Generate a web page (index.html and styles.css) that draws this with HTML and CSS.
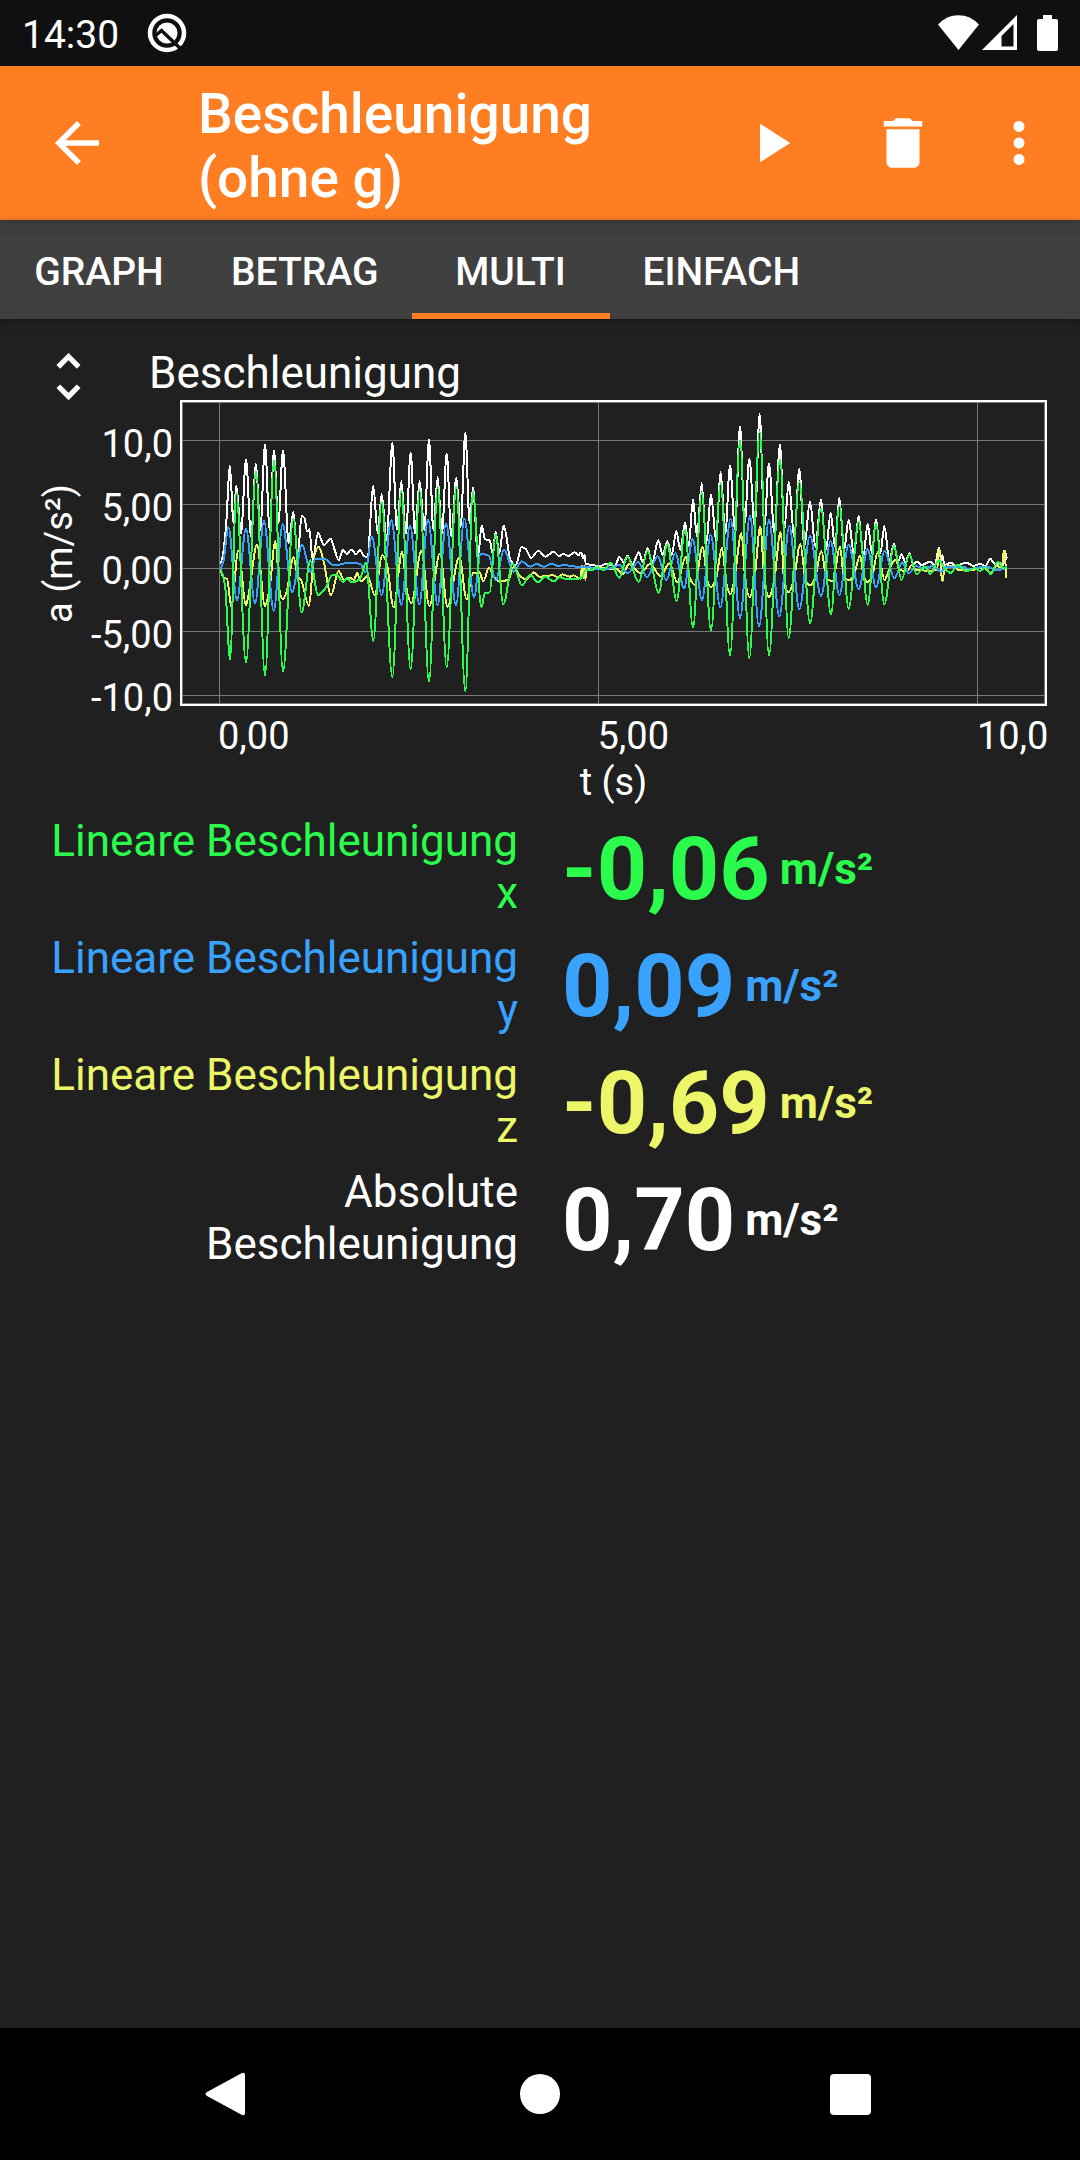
FILE: index.html
```html
<!DOCTYPE html>
<html lang="de">
<head>
<meta charset="utf-8">
<meta name="viewport" content="width=device-width">
<title>Beschleunigung (ohne g)</title>
<link rel="stylesheet" href="styles.css">
</head>
<body>
<div class="status-bar">
  <time class="clock">14:30</time>
  <svg class="status-logo" viewBox="0 0 40 40" aria-hidden="true">
    <circle cx="20" cy="20" r="17" fill="none" stroke="#fff" stroke-width="4.500"/>
    <circle cx="20" cy="20" r="10.500" fill="#fff"/>
    <path d="M8 23l6.500-5.500L36 38" fill="none" stroke="#101010" stroke-width="3.500"/>
  </svg>
  <div class="status-icons">
    <svg class="wifi" viewBox="0 0 41 36" aria-hidden="true"><path d="M0 9.500C11-3 30-3 41 9.500L20.500 35z"/></svg>
    <svg class="signal" viewBox="0 0 35 36" aria-hidden="true"><path fill-rule="evenodd" d="M35 0v35H0zM31.500 9L19.500 21v10.500h12z"/></svg>
    <svg class="battery" viewBox="0 0 21 36" aria-hidden="true"><path d="M6 0h9v4h4q2 0 2 2v28q0 2-2 2H2q-2 0-2-2V6q0-2 2-2h4z"/></svg>
  </div>
</div>

<header class="app-bar">
  <button class="icon-button back" aria-label="Zurück"><svg viewBox="0 0 24 24"><path d="M20 11H7.830l5.590-5.590L12 4l-8 8 8 8 1.410-1.410L7.830 13H20v-2z"/></svg></button>
  <h1 class="title">Beschleunigung (ohne g)</h1>
  <button class="icon-button action" aria-label="Start"><svg viewBox="0 0 24 24"><path d="M8 5v14l11-7z"/></svg></button>
  <button class="icon-button action" aria-label="Löschen"><svg viewBox="0 0 24 24"><path d="M6 19c0 1.100.9 2 2 2h8c1.100 0 2-.9 2-2V7H6v12zM19 4h-3.500l-1-1h-5l-1 1H5v2h14V4z"/></svg></button>
  <button class="icon-button more" aria-label="Mehr"><svg viewBox="0 0 24 24"><path d="M12 8c1.100 0 2-.9 2-2s-.9-2-2-2-2 .9-2 2 .9 2 2 2zm0 2c-1.100 0-2 .9-2 2s.9 2 2 2 2-.9 2-2-.9-2-2-2zm0 6c-1.100 0-2 .9-2 2s.9 2 2 2 2-.9 2-2-.9-2-2-2z"/></svg></button>
</header>

<nav class="tabs">
  <button class="tab">GRAPH</button>
  <button class="tab">BETRAG</button>
  <button class="tab tab-active">MULTI</button>
  <button class="tab">EINFACH</button>
</nav>

<main class="content">
  <section class="graph">
    <div class="graph-head">
      <button class="icon-button expand" aria-label="Vergrößern"><svg viewBox="0 0 24 24"><path d="M12 5.830L15.170 9l1.410-1.410L12 3 7.410 7.590 8.830 9 12 5.830zm0 12.340L8.830 15l-1.410 1.410L12 21l4.590-4.590L15.170 15 12 18.170z"/></svg></button>
      <h2 class="graph-title">Beschleunigung</h2>
    </div>
    <div class="chart">
      <div class="y-title">a (m/s²)</div>
      <div class="y-ticks"><span>10,0</span><span>5,00</span><span>0,00</span><span>-5,00</span><span>-10,0</span></div>
      <svg class="plot" viewBox="0 30 2601 918" preserveAspectRatio="none" role="img" aria-label="Beschleunigung über der Zeit">
        <g class="grid">
          <path d="M118.500 30V948M1255.500 30V948M2392.500 30V948"/>
          <path d="M0 151.500H2601M0 343.500H2601M0 535.500H2601M0 724.500H2601M0 916.500H2601"/>
          <rect x="7.500" y="37.500" width="2586" height="903"/>
        </g>
        <rect class="frame" x="3" y="33" width="2595" height="912"/>
        <path class="series abs" id="abs"/>
        <path class="series z" id="z"/>
        <path class="series y" id="y"/>
        <path class="series x" id="x"/>
      </svg>
      <div class="x-ticks"><span>0,00</span><span>5,00</span><span>10,0</span></div>
      <div class="x-title">t (s)</div>
    </div>
  </section>

  <dl class="values">
    <div class="row green"><dt>Lineare Beschleunigung x</dt><dd><span class="number">-0,06</span><span class="unit">m/s²</span></dd></div>
    <div class="row blue"><dt>Lineare Beschleunigung y</dt><dd><span class="number">0,09</span><span class="unit">m/s²</span></dd></div>
    <div class="row yellow"><dt>Lineare Beschleunigung z</dt><dd><span class="number">-0,69</span><span class="unit">m/s²</span></dd></div>
    <div class="row"><dt>Absolute Beschleunigung</dt><dd><span class="number">0,70</span><span class="unit">m/s²</span></dd></div>
  </dl>
</main>

<footer class="system-nav">
  <button class="nav-button" aria-label="Zurück"><svg viewBox="0 0 48 48"><path d="M38 3L3 22q-3 2 0 4l35 19q3 1 3-2V5q0-3-3-2z"/></svg></button>
  <button class="nav-button" aria-label="Startseite"><svg viewBox="0 0 48 48"><circle cx="24" cy="24" r="20"/></svg></button>
  <button class="nav-button" aria-label="Übersicht"><svg viewBox="0 0 48 48"><rect x="2" y="4" width="41" height="41" rx="4"/></svg></button>
</footer>
<script src="chart.js"></script>
</body>
</html>
```
FILE: styles.css
```css
* { box-sizing: border-box; }

body {
  margin: 0;
  min-height: 100vh;
  display: flex;
  flex-direction: column;
  background: #202020;
  color: #fff;
  font-family: Roboto, "Liberation Sans", sans-serif;
  font-size: 44px;
  line-height: 52px;
}

h1, h2, dl, dt, dd { margin: 0; font-weight: 400; }

button {
  border: 0;
  padding: 0;
  background: none;
  color: inherit;
  font: inherit;
}

svg { display: block; fill: #fff; }

.status-bar {
  display: flex;
  align-items: center;
  height: 66px;
  padding: 0 22px;
  background: #101010;
}
.clock { padding-top: 4px; font-size: 39px; line-height: 44px; }
.status-logo { width: 40px; height: 40px; margin-left: 28px; }
.status-icons { display: flex; margin-left: auto; }
.wifi { width: 41px; height: 36px; }
.signal { width: 35px; height: 36px; margin: 0 20px 0 3px; }
.battery { width: 21px; height: 36px; }

.app-bar {
  display: flex;
  align-items: center;
  min-height: 154px;
  padding: 0 11px 0 44px;
  background: #ff7e22;
}
.icon-button { display: flex; justify-content: center; align-items: center; flex: none; }
.icon-button svg { width: 66px; height: 66px; }
.title {
  flex: 1;
  padding-top: 6px;
  margin-left: 88px;
  font-size: 55px;
  font-weight: 500;
  line-height: 64px;
}
.action { width: 132px; height: 132px; }
.more { width: 100px; height: 132px; }

.tabs {
  display: flex;
  height: 99px;
  background: linear-gradient(#393939, #404040 20px);
  box-shadow: 0 2px 8px rgba(0, 0, 0, 0.3);
}
.tab {
  min-width: 198px;
  padding: 10px 33px 0;
  border-bottom: 6px solid transparent;
  font-size: 39px;
  font-weight: 500;
  line-height: 44px;
}
.tab-active { border-bottom-color: #ff7e22; }

.content { flex: 1; padding-top: 26px; }

.graph { padding: 0 33px 0 37px; }
.graph-head { display: flex; align-items: flex-start; height: 55px; }
.expand svg { width: 63px; height: 63px; }
.graph-title { padding-top: 2px; margin-left: 49px; font-size: 44px; }

.chart {
  display: grid;
  grid-template-columns: 44px 99px 1fr;
  grid-template-rows: 306px auto auto;
  font-size: 38px;
  line-height: 44px;
}
.y-title {
  justify-self: start;
  align-self: center;
  writing-mode: vertical-rl;
  rotate: 180deg;
  white-space: nowrap;
}
.y-ticks {
  grid-row: 1 / 3;
  grid-column: 2;
  display: flex;
  flex-direction: column;
  justify-content: space-between;
  align-self: start;
  align-items: flex-end;
  height: 320px;
  padding: 22px 7px 0 0;
}
.plot { grid-row: 1; grid-column: 3; width: 100%; height: 306px; shape-rendering: crispEdges; }
.x-ticks {
  grid-column: 3;
  display: grid;
  grid-template-columns: 379fr 379fr 70fr;
  padding: 8px 0 0 38px;
}
.x-ticks span { width: 0; }
.x-title { grid-column: 3; padding-top: 2px; text-align: center; }

.grid path, .grid rect { fill: none; stroke: #7a7a7a; stroke-width: 3; }
.frame { fill: none; stroke: #fff; stroke-width: 6; }
.series { fill: none; stroke-width: 6; stroke-linejoin: round; }
.abs { stroke: #fff; }
.x { stroke: #2bfb4c; }
.y { stroke: #39a2ff; }
.z { stroke: #edf668; }

.values { padding: 11px 33px 0; }
.row { display: grid; grid-template-columns: 1fr 1fr; align-items: start; padding-bottom: 13px; }
.row dt { padding-right: 22px; text-align: right; }
.row dd { display: flex; align-items: center; gap: 10px; padding-left: 22px; font-weight: 700; }
.number { padding-top: 4px; font-size: 88px; line-height: 100px; }
.unit { padding-top: 4px; }
.green { color: #2bfb4c; }
.blue { color: #39a2ff; }
.yellow { color: #edf668; }

.system-nav {
  display: flex;
  justify-content: center;
  gap: 180px;
  height: 132px;
  background: #000;
}
.nav-button { display: flex; justify-content: center; align-items: center; width: 132px; }
.nav-button svg { width: 48px; height: 48px; }
```
FILE: chart.js
```js
// Sample points of every series in plot units, as "x,y" pairs.
const series = {
  abs: `120,520 128,498 138,410 150,228 160,400 169,287 183,430 198,208 213,440 228,221 241,420 255,163 269,420 282,181 295,400 309,181 326,460 340,367 353,500 365,378 374,384 381,425 388,418 398,510 414,429 432,465 452,446 464,480 476,510 489,480 500,492 514,479 528,493 541,480 550,497 562,502 580,289 593,430 605,313 620,450 637,159 651,420 664,274 678,430 692,187 705,430 719,274 733,420 747,148 760,420 773,262 786,430 800,190 814,440 829,263 842,410 856,129 869,400 879,292 894,500 905,407 915,448 929,450 938,490 947,425 958,490 971,406 992,512 1007,525 1025,471 1038,478 1053,504 1075,482 1096,500 1121,485 1137,498 1150,492 1165,498 1184,487 1196,495 1203,487 1209,505 1214,494 1217,522 1240,525 1255,530 1279,522 1305,528 1318,501 1332,518 1342,497 1358,522 1376,487 1389,517 1403,475 1416,518 1435,451 1448,495 1462,454 1475,495 1489,424 1501,480 1515,398 1526,470 1539,328 1551,440 1565,280 1579,460 1593,313 1608,450 1622,247 1636,430 1650,226 1665,420 1680,108 1694,400 1708,205 1724,410 1739,72 1753,410 1767,220 1783,430 1800,163 1813,420 1826,277 1843,440 1858,237 1873,470 1890,334 1906,470 1923,328 1938,480 1952,368 1965,470 1978,322 1992,480 2006,389 2022,495 2036,377 2050,500 2063,401 2076,490 2088,388 2101,490 2113,409 2128,512 2142,462 2154,515 2165,493 2176,518 2188,490 2200,522 2210,515 2225,525 2251,515 2265,525 2277,472 2282,505 2287,495 2293,525 2313,518 2325,527 2360,518 2380,528 2400,522 2417,528 2430,506 2445,522 2460,520 2470,525 2475,485 2482,508`,
  z: `120,540 130,562 141,567 154,650 175,482 198,645 208,600 231,463 255,648 268,600 286,453 300,610 309,628 320,605 341,500 352,555 364,572 387,648 402,500 416,470 430,510 453,615 476,543 492,570 510,563 522,570 531,549 543,574 563,558 584,615 607,496 620,520 641,652 666,486 682,610 694,640 724,483 748,648 780,490 802,650 838,502 860,628 878,550 898,547 910,574 927,533 942,560 960,575 986,568 1001,530 1020,558 1038,568 1062,547 1078,560 1120,556 1135,562 1147,553 1170,560 1180,556 1202,566 1206,528 1210,565 1214,528 1216,570 1219,540 1250,534 1290,536 1310,537 1328,553 1347,522 1382,550 1410,522 1442,558 1468,520 1492,577 1517,500 1530,565 1544,584 1568,470 1583,575 1593,591 1608,565 1626,474 1640,585 1651,612 1663,570 1684,430 1697,580 1709,622 1723,570 1741,410 1755,590 1767,621 1782,575 1802,425 1814,590 1826,606 1840,575 1861,463 1877,570 1890,587 1905,565 1924,483 1940,566 1958,573 1980,470 1992,563 2007,570 2020,560 2040,497 2052,563 2063,576 2076,560 2093,487 2114,570 2125,545 2148,508 2158,540 2182,543 2194,526 2210,540 2250,542 2272,538 2275,480 2279,480 2283,520 2285,572 2289,572 2292,540 2310,527 2340,541 2370,541 2410,533 2432,550 2450,528 2466,533 2471,482 2475,482 2478,560 2482,562`,
  y: `120,538 130,515 145,411 171,630 198,416 225,640 252,393 281,662 308,402 336,607 366,464 392,545 405,507 435,507 458,524 478,524 500,519 540,521 557,547 575,440 605,615 634,390 664,645 690,407 718,643 744,388 773,645 798,401 828,646 853,386 882,622 902,492 926,497 947,571 972,479 1001,545 1025,514 1050,530 1070,522 1092,530 1115,521 1135,528 1152,525 1190,530 1220,530 1250,537 1295,535 1318,524 1343,549 1375,516 1401,562 1433,498 1459,571 1486,489 1512,595 1538,448 1566,630 1592,435 1621,652 1652,386 1680,684 1710,378 1737,710 1767,390 1798,680 1828,408 1858,658 1890,437 1923,618 1952,453 1978,615 2006,464 2036,597 2063,478 2088,592 2114,482 2143,565 2167,517 2186,550 2208,528 2230,535 2260,528 2282,545 2300,530 2350,530 2365,537 2420,530 2450,540 2470,537 2482,530`,
  x: `120,538 135,585 150,808 169,308 198,818 228,245 255,856 282,212 309,845 340,386 365,667 391,511 414,615 438,592 456,556 472,556 489,577 501,564 516,577 540,566 558,518 580,752 605,335 637,862 664,303 692,838 719,300 747,875 773,290 800,832 829,290 856,905 879,306 904,652 915,609 929,607 947,434 970,643 998,521 1026,586 1050,555 1074,577 1096,560 1122,575 1138,561 1160,568 1180,568 1205,563 1217,541 1235,541 1250,532 1272,540 1292,519 1318,563 1342,500 1376,576 1403,483 1436,608 1462,463 1490,633 1515,418 1539,713 1565,308 1593,721 1622,280 1650,797 1680,152 1708,806 1739,122 1767,797 1800,208 1826,745 1858,275 1890,700 1923,356 1953,673 1978,347 2006,656 2036,395 2063,645 2088,402 2113,643 2142,468 2165,570 2188,493 2210,552 2236,530 2251,552 2277,511 2295,536 2312,549 2334,524 2358,544 2385,534 2400,543 2417,532 2432,553 2453,516 2470,535 2482,535`
};

// Monotone cubic curve: flat at every peak and trough, no overshoot.
function curve(points) {
  const secant = (a, b) => (b[1] - a[1]) / (b[0] - a[0]);
  const slopes = points.map((p, i) => {
    if (i === 0 || i === points.length - 1) return 0;
    const before = secant(points[i - 1], p);
    const after = secant(p, points[i + 1]);
    return before * after > 0 ? (2 * before * after) / (before + after) : 0;
  });
  let d = `M${points[0]}`;
  for (let i = 1; i < points.length; i++) {
    const [x0, y0] = points[i - 1];
    const [x1, y1] = points[i];
    const third = (x1 - x0) / 3;
    d += `C${x0 + third},${y0 + slopes[i - 1] * third} ${x1 - third},${y1 - slopes[i] * third} ${x1},${y1}`;
  }
  return d;
}

for (const [id, data] of Object.entries(series)) {
  const points = data.split(" ").map((pair) => pair.split(",").map(Number));
  document.getElementById(id).setAttribute("d", curve(points));
}
```
